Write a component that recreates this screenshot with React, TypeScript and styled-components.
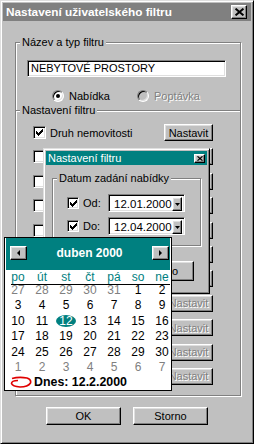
import React from 'react'
import styled, { createGlobalStyle, css } from 'styled-components'

const GlobalStyle = createGlobalStyle`
  body {
    margin: 0;
    background: #c0c0c0;
  }
`

const raised = css`
  border: 1px solid;
  border-color: #fff #000 #000 #fff;
  box-shadow: inset -1px -1px #808080, inset 1px 1px #dfdfdf;
`

const sunken = css`
  border: 1px solid;
  border-color: #808080 #fff #fff #808080;
  box-shadow: inset 1px 1px #000, inset -1px -1px #dfdfdf;
`

const Window = styled.div`
  position: relative;
  width: 254px;
  height: 444px;
  box-sizing: border-box;
  background: #c0c0c0;
  border: 1px solid;
  border-color: #dfdfdf #000 #000 #dfdfdf;
  box-shadow: inset 1px 1px #fff, inset -1px -1px #808080;
  padding: 2px;
  display: flex;
  flex-direction: column;
  font-family: 'Liberation Sans', Arial, sans-serif;
  font-size: 11px;
  color: #000;
`

const TitleBar = styled.div<{ $active?: boolean; $small?: boolean }>`
  display: flex;
  align-items: center;
  height: ${(p) => (p.$small ? 14 : 18)}px;
  padding: 0 ${(p) => (p.$small ? 2 : 4)}px 0 ${(p) => (p.$small ? 2 : 3)}px;
  background: ${(p) => (p.$active ? '#008080' : '#808080')};
  color: #fff;
  font-weight: ${(p) => (p.$small ? 400 : 700)};
  font-size: ${(p) => (p.$small ? 11 : 11.8)}px;
  white-space: nowrap;
`

const TitleText = styled.span`
  flex: 1;
`

const CloseButton = styled.div<{ $small?: boolean }>`
  ${raised};
  box-sizing: border-box;
  width: ${(p) => (p.$small ? 11 : 16)}px;
  height: ${(p) => (p.$small ? 9 : 14)}px;
  background: #c0c0c0;
  display: flex;
  align-items: center;
  justify-content: center;
`

const Group = styled.div<{ $mt: number; $mx?: string }>`
  position: relative;
  margin: ${(p) => p.$mt}px ${(p) => p.$mx ?? '10px 0 12px'};
  border: 1px solid #808080;
  box-shadow: inset 1px 1px #fff, 1px 1px #fff;
`

const GroupLabel = styled.div`
  width: fit-content;
  margin: -7px 0 0 4px;
  padding: 0 2px;
  background: #c0c0c0;
  line-height: 13px;
  white-space: nowrap;
`

const TextInput = styled.div`
  ${sunken};
  box-sizing: border-box;
  margin: 11px 0 0 11px;
  width: 199px;
  height: 17px;
  padding-left: 3px;
  background: #fff;
  line-height: 15px;
`

const RadioRow = styled.div`
  display: flex;
  margin: 12px 0 8px 36px;
  height: 13px;
`

const RadioOption = styled.label<{ $disabled?: boolean }>`
  display: flex;
  align-items: center;
  gap: 5px;
  width: 85px;
  color: ${(p) => (p.$disabled ? '#808080' : '#000')};
  text-shadow: ${(p) => (p.$disabled ? '1px 1px #fff' : 'none')};
`

const RadioDot = styled.span<{ $checked?: boolean; $disabled?: boolean }>`
  position: relative;
  box-sizing: border-box;
  width: 12px;
  height: 12px;
  border-radius: 50%;
  border: 1px solid;
  border-color: #808080 #fff #fff #808080;
  box-shadow: inset 1px 1px #000, inset -1px -1px #dfdfdf;
  background: ${(p) => (p.$disabled ? '#c0c0c0' : '#fff')};

  &::after {
    content: '';
    display: ${(p) => (p.$checked ? 'block' : 'none')};
    position: absolute;
    left: 3px;
    top: 3px;
    width: 4px;
    height: 4px;
    border-radius: 50%;
    background: #000;
  }
`

const FilterRows = styled.div`
  display: grid;
  grid-template-columns: 13px 1fr 49px;
  grid-auto-rows: 17px;
  column-gap: 4px;
  row-gap: 7.4px;
  align-items: center;
  margin-top: 7px;
  padding: 0 27px 10px 17px;
`

const CheckBox = styled.span<{ $size?: number }>`
  ${sunken};
  box-sizing: border-box;
  width: ${(p) => p.$size ?? 13}px;
  height: ${(p) => p.$size ?? 13}px;
  background: #fff;
  display: flex;
  align-items: center;
  justify-content: center;
`

const RowLabel = styled.span`
  white-space: nowrap;
`

const Button = styled.div<{ $w?: number; $h?: number; $disabled?: boolean }>`
  ${raised};
  box-sizing: border-box;
  width: ${(p) => (p.$w ? `${p.$w}px` : 'auto')};
  height: ${(p) => p.$h ?? 17}px;
  background: #c0c0c0;
  display: flex;
  align-items: center;
  justify-content: center;
  color: ${(p) => (p.$disabled ? '#808080' : '#000')};
  text-shadow: ${(p) => (p.$disabled ? '1px 1px #fff' : 'none')};
  white-space: nowrap;
`

const Footer = styled.div<{ $mt: number; $gap: number }>`
  display: flex;
  justify-content: center;
  gap: ${(p) => p.$gap}px;
  margin-top: ${(p) => p.$mt}px;
`

/* overlapping sub-dialog */
const SubDialog = styled.div`
  position: absolute;
  left: 42px;
  top: 147px;
  width: 167px;
  height: 146px;
  box-sizing: border-box;
  background: #c0c0c0;
  border: 1px solid;
  border-color: #dfdfdf #000 #000 #dfdfdf;
  box-shadow: inset 1px 1px #fff, inset -1px -1px #808080;
  padding: 2px;
`

const DateRows = styled.div`
  display: flex;
  flex-direction: column;
  gap: 5px;
  margin-top: 9px;
  padding: 0 0 10px 14px;
`

const DateRow = styled.div`
  display: flex;
  align-items: center;
  height: 18px;
`

const DateLabel = styled.span`
  width: 25px;
  margin-left: 4px;
`

const Combo = styled.div`
  ${sunken};
  box-sizing: border-box;
  width: 77px;
  height: 18px;
  padding: 2px;
  background: #fff;
  display: flex;
`

const ComboValue = styled.span`
  flex: 1;
  padding-left: 3px;
  line-height: 14px;
  font-size: 11.5px;
`

const DropButton = styled.div`
  ${raised};
  box-sizing: border-box;
  width: 10px;
  height: 14px;
  background: #c0c0c0;
  display: flex;
  align-items: center;
  justify-content: center;
`

/* month calendar dropdown */
const Calendar = styled.div`
  position: absolute;
  left: 3px;
  top: 236px;
  width: 168px;
  box-sizing: border-box;
  border: 1px solid #000;
  padding: 0 1px 1px;
  background: #fff;
  font-size: 12px;
`

const CalHeader = styled.div`
  height: 32px;
  background: #008080;
  display: flex;
  align-items: center;
  justify-content: space-between;
  padding: 0 1px 3px 4px;
  box-sizing: border-box;
`

const CalTitle = styled.span`
  color: #fff;
  font-weight: 700;
  font-size: 12px;
`

const NavButton = styled.div`
  ${raised};
  box-sizing: border-box;
  width: 17px;
  height: 14px;
  background: #c0c0c0;
  display: flex;
  align-items: center;
  justify-content: center;
`

const WeekGrid = styled.div`
  display: grid;
  grid-template-columns: repeat(7, 24px);
  width: 168px;
  text-align: center;
`

const DowRow = styled(WeekGrid)`
  height: 14px;
  line-height: 14px;
  color: #008080;
`

const Rule = styled.div`
  height: 1px;
  margin-left: 5px;
  background: #000;
`

const DayGrid = styled(WeekGrid)`
  margin-top: -2px;
  grid-auto-rows: 15.4px;
  line-height: 15.4px;
`

const Day = styled.span<{ $muted?: boolean }>`
  color: ${(p) => (p.$muted ? '#808080' : '#000')};
`

const Selected = styled.span`
  display: inline-block;
  width: 20px;
  height: 12px;
  line-height: 12px;
  border-radius: 50%;
  background: #008080;
  color: #fff;
`

const TodayRow = styled.div`
  display: flex;
  align-items: center;
  gap: 2px;
  height: 14px;
  padding-left: 4px;
  font-weight: 700;
  font-size: 12.4px;
`

const CheckMark = () => (
  <svg width="7" height="7" viewBox="0 0 7 7" shapeRendering="crispEdges">
    <path d="M0 2 L2 4 L6 0 L7 0 L7 3 L2 7 L0 5 Z" fill="#000" />
  </svg>
)

const Cross = ({ size }: { size: number }) => (
  <svg width={size} height={size - 1} viewBox="0 0 8 7">
    <path d="M0.5 0.5 L7.5 6.5 M7.5 0.5 L0.5 6.5" stroke="#000" strokeWidth="1.7" />
  </svg>
)

const Arrow = ({ dir }: { dir: 'left' | 'right' | 'down' }) => {
  const d = dir === 'left' ? 'M3 0 L3 6 L0 3 Z' : dir === 'right' ? 'M0 0 L3 3 L0 6 Z' : 'M0 0 L5 0 L2.5 3 Z'
  const w = dir === 'down' ? 5 : 3
  const h = dir === 'down' ? 3 : 6
  return (
    <svg width={w} height={h} viewBox={`0 0 ${w} ${h}`}>
      <path d={d} fill="#000" />
    </svg>
  )
}

const TodayCircle = () => (
  <svg width="22" height="12" viewBox="0 0 22 12">
    <path
      d="M2 2.5 Q9 0.5 17 2 Q21.5 3.5 20.5 7 Q18 11 10 11 Q2.5 10.5 1.5 7.5 Q1.5 4.5 8 4.5"
      fill="none"
      stroke="#e00000"
      strokeWidth="1.6"
    />
  </svg>
)

const rows = [
  { label: 'Druh nemovitosti', checked: true, disabled: false },
  ...Array.from({ length: 6 }, () => ({ label: '', checked: false, disabled: false })),
  ...Array.from({ length: 4 }, () => ({ label: '', checked: false, disabled: true })),
]

const dow = ['po', 'út', 'st', 'čt', 'pá', 'so', 'ne']

const days = [
  ...[27, 28, 29, 30, 31].map((d) => ({ d, muted: true })),
  ...Array.from({ length: 30 }, (_, i) => ({ d: i + 1, muted: false })),
  ...Array.from({ length: 7 }, (_, i) => ({ d: i + 1, muted: true })),
]

export default function App() {
  return (
    <>
      <GlobalStyle />
      <Window>
        <TitleBar>
          <TitleText>Nastavení uživatelského filtru</TitleText>
          <CloseButton>
            <Cross size={9} />
          </CloseButton>
        </TitleBar>

        <Group $mt={21}>
          <GroupLabel>Název a typ filtru</GroupLabel>
          <TextInput>NEBYTOVÉ PROSTORY</TextInput>
          <RadioRow>
            <RadioOption>
              <RadioDot $checked />
              Nabídka
            </RadioOption>
            <RadioOption $disabled>
              <RadioDot $disabled />
              Poptávka
            </RadioOption>
          </RadioRow>
        </Group>

        <Group $mt={-1}>
          <GroupLabel>Nastavení filtru</GroupLabel>
          <FilterRows>
            {rows.map((r, i) => (
              <React.Fragment key={i}>
                <CheckBox>{r.checked && <CheckMark />}</CheckBox>
                <RowLabel>{r.label}</RowLabel>
                <Button $disabled={r.disabled}>Nastavit</Button>
              </React.Fragment>
            ))}
          </FilterRows>
        </Group>

        <Footer $mt={11} $gap={12}>
          <Button $w={75} $h={18}>
            OK
          </Button>
          <Button $w={75} $h={18}>
            Storno
          </Button>
        </Footer>

        <SubDialog>
          <TitleBar $active $small>
            <TitleText>Nastavení filtru</TitleText>
            <CloseButton $small>
              <Cross size={6} />
            </CloseButton>
          </TitleBar>
          <Group $mt={13} $mx="6px">
            <GroupLabel>Datum zadání nabídky</GroupLabel>
            <DateRows>
              <DateRow>
                <CheckBox $size={12}>
                  <CheckMark />
                </CheckBox>
                <DateLabel>Od:</DateLabel>
                <Combo>
                  <ComboValue>12.01.2000</ComboValue>
                  <DropButton>
                    <Arrow dir="down" />
                  </DropButton>
                </Combo>
              </DateRow>
              <DateRow>
                <CheckBox $size={12}>
                  <CheckMark />
                </CheckBox>
                <DateLabel>Do:</DateLabel>
                <Combo>
                  <ComboValue>12.04.2000</ComboValue>
                  <DropButton>
                    <Arrow dir="down" />
                  </DropButton>
                </Combo>
              </DateRow>
            </DateRows>
          </Group>
          <Footer $mt={15} $gap={8}>
            <Button $w={63} $h={20}>
              OK
            </Button>
            <Button $w={63} $h={20}>
              Storno
            </Button>
          </Footer>
        </SubDialog>

        <Calendar>
          <CalHeader>
            <NavButton>
              <Arrow dir="left" />
            </NavButton>
            <CalTitle>duben 2000</CalTitle>
            <NavButton>
              <Arrow dir="right" />
            </NavButton>
          </CalHeader>
          <DowRow>
            {dow.map((d) => (
              <span key={d}>{d}</span>
            ))}
          </DowRow>
          <Rule />
          <DayGrid>
            {days.map((x, i) =>
              !x.muted && x.d === 12 ? (
                <span key={i}>
                  <Selected>12</Selected>
                </span>
              ) : (
                <Day key={i} $muted={x.muted}>
                  {x.d}
                </Day>
              ),
            )}
          </DayGrid>
          <TodayRow>
            <TodayCircle />
            Dnes: 12.2.2000
          </TodayRow>
        </Calendar>
      </Window>
    </>
  )
}
